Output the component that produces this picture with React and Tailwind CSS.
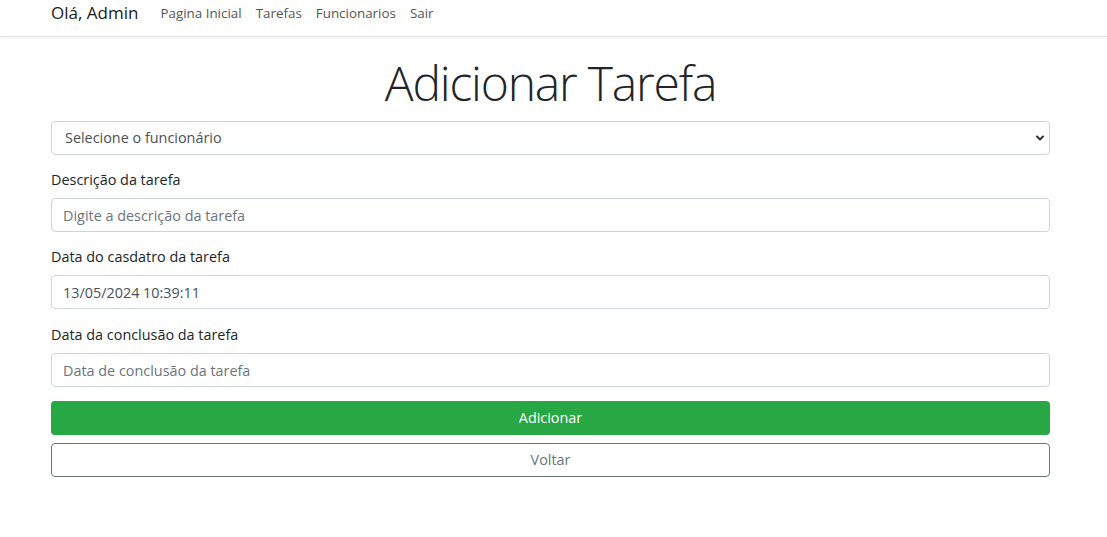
import React from "react";
import { ChevronDown } from "lucide-react";

const Field = ({ label, gap = "mb-[14px]", children }) => (
  <div className={gap}>
    <label className="block text-[14.4px] leading-[22px] text-[#212529] mb-[7px]">{label}</label>
    {children}
  </div>
);

const inputCls =
  "block w-full h-[34px] px-[11px] border border-[#ced4da] rounded-[4px] text-[14.4px] text-[#495057] placeholder:text-[#6c757d] outline-none bg-white";

export default function App() {
  return (
    <div className="min-h-screen bg-white [font-family:'Open_Sans',sans-serif]">
      <nav className="h-[37px] border-b border-[#e3e3e3] shadow-[0_2px_3px_rgba(0,0,0,0.04)]">
        <div className="w-[999px] ml-[51px] flex items-start">
          <span className="text-[17px] text-[#1a1a1a] mr-[15px] leading-[26px]">Olá, Admin</span>
          <ul className="flex items-center text-[13.4px] leading-[22px] pt-[2px] text-[#555]">
            {["Pagina Inicial", "Tarefas", "Funcionarios", "Sair"].map((t) => (
              <li key={t} className="px-[7px]">
                {t}
              </li>
            ))}
          </ul>
        </div>
      </nav>

      <main className="w-[999px] ml-[51px] pt-[16px]">
        <h1 className="text-center text-[48px] font-light leading-[60px] tracking-[-1.2px] text-[#212529] mb-[8px]">
          Adicionar Tarefa
        </h1>

        <div className="relative mb-[14px]">
          <select className={inputCls + " appearance-none px-[13px] text-[#495057]"} defaultValue="">
            <option value="">Selecione o funcionário</option>
          </select>
          <ChevronDown
            size={12}
            strokeWidth={4}
            className="absolute right-[4px] top-[11px] text-[#333] pointer-events-none"
          />
        </div>

        <Field label="Descrição da tarefa">
          <input className={inputCls} placeholder="Digite a descrição da tarefa" />
        </Field>
        <Field label="Data do casdatro da tarefa" gap="mb-[15px]">
          <input className={inputCls} defaultValue="13/05/2024 10:39:11" />
        </Field>
        <Field label="Data da conclusão da tarefa">
          <input className={inputCls} placeholder="Data de conclusão da tarefa" />
        </Field>

        <button className="block w-full h-[34px] rounded-[4px] bg-[#28a745] text-white text-[14.4px]">
          Adicionar
        </button>
        <button className="block w-full h-[34px] mt-[8px] rounded-[4px] border border-[#6c757d] bg-white text-[#6c757d] text-[14.4px]">
          Voltar
        </button>
      </main>
    </div>
  );
}
